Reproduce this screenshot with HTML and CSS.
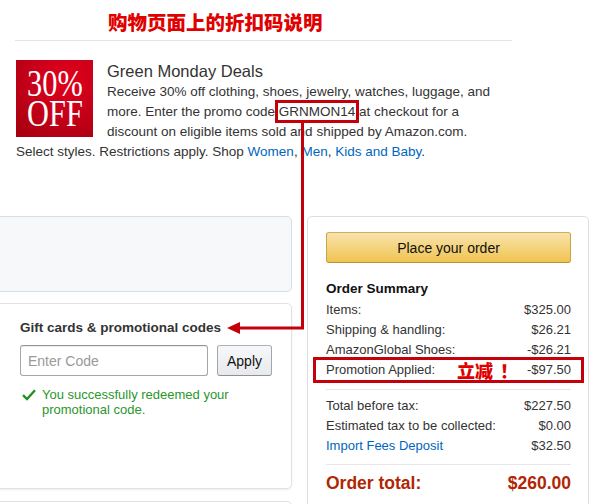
FILE: index.html
```html
<!DOCTYPE html>
<html>
<head>
<meta charset="utf-8">
<link rel="stylesheet" href="styles.css">
</head>
<body>
<div class="page">
  <header class="top">
    <h1 class="title">购物页面上的折扣码说明</h1>
  </header>
  <section class="promo">
    <div class="badge"><span>30%</span><span>OFF</span></div>
    <h2 class="promo-title">Green Monday Deals</h2>
    <p class="promo-text">Receive 30% off clothing, shoes, jewelry, watches, luggage, and more. Enter the promo code <span class="code">GRNMON14</span> at checkout for a discount on eligible items sold and shipped by Amazon.com. Select styles. Restrictions apply. Shop <a href="#">Women</a>, <a href="#">Men</a>, <a href="#">Kids and Baby</a>.</p>
  </section>
  <div class="checkout">
    <div class="left">
      <div class="panel panel-grey"></div>
      <div class="panel panel-gift">
        <h3 class="gift-title">Gift cards &amp; promotional codes</h3>
        <div class="code-row">
          <input class="code-input" type="text" placeholder="Enter Code">
          <button class="apply">Apply</button>
        </div>
        <div class="success">
          <svg class="check" width="14" height="12" viewBox="0 0 14 12"><path d="M1 6.2 L5 10 L13 1.2" fill="none" stroke="#1f8f1f" stroke-width="2.3"/></svg>
          <span>You successfully redeemed your promotional code.</span>
        </div>
      </div>
      <div class="panel panel-next"></div>
    </div>
    <div class="right">
      <div class="summary">
        <button class="place">Place your order</button>
        <h3 class="sum-title">Order Summary</h3>
        <div class="row"><span class="lbl">Items:</span><span class="val">$325.00</span></div>
        <div class="row"><span class="lbl">Shipping &amp; handling:</span><span class="val">$26.21</span></div>
        <div class="row"><span class="lbl">AmazonGlobal Shoes:</span><span class="val">-$26.21</span></div>
        <div class="row row-promo"><span class="lbl">Promotion Applied:</span><span class="note">立减<span class="bang">！</span></span><span class="val">-$97.50</span></div>
        <div class="divider"></div>
        <div class="row"><span class="lbl">Total before tax:</span><span class="val">$227.50</span></div>
        <div class="row"><span class="lbl">Estimated tax to be collected:</span><span class="val">$0.00</span></div>
        <div class="row"><a class="lbl link" href="#">Import Fees Deposit</a><span class="val">$32.50</span></div>
        <div class="divider divider-2"></div>
        <div class="row total"><span class="lbl">Order total:</span><span class="val">$260.00</span></div>
      </div>
    </div>
  </div>
  <svg class="annot" width="596" height="504" viewBox="0 0 596 504">
    <path d="M302.5 122 V328 H238" fill="none" stroke="#c4000b" stroke-width="3"/>
    <polygon points="227,328 240,322 240,334" fill="#c4000b"/>
  </svg>
</div>
</body>
</html>
```
FILE: styles.css
```css
html, body {
  margin: 0;
  padding: 0;
  background: #fff;
}
body {
  width: 596px;
  height: 504px;
  overflow: hidden;
  font-family: "Liberation Sans", Arial, sans-serif;
  color: #333;
}
.page {
  position: relative;
  width: 596px;
  height: 504px;
  overflow: hidden;
}
.top {
  margin: 0 84px 0 15px;
  padding-top: 8px;
  border-bottom: 1px solid #e4e4e4;
  padding-bottom: 4px;
}
.title {
  margin: 0;
  padding-left: 93px;
  font-family: "Noto Sans CJK SC", sans-serif;
  font-size: 19.5px;
  line-height: 28px;
  font-weight: 900;
  color: #e00000;
}
.promo {
  margin-top: 19px;
  padding-left: 16px;
  width: 489px;
}
.badge {
  float: left;
  width: 77px;
  height: 77px;
  margin-right: 14px;
  background: radial-gradient(circle at 65% 25%, #e2001b 0%, #c8001a 45%, #a3000e 100%);
  display: flex;
  flex-direction: column;
  align-items: center;
  justify-content: center;
  color: #fff;
  font-family: "Liberation Serif", "Times New Roman", serif;
  font-size: 37px;
  line-height: 30px;
}
.badge span {
  display: block;
  transform: scaleX(0.82);
}
.promo-title {
  margin: 0;
  font-size: 16.5px;
  line-height: 22px;
  font-weight: normal;
  color: #333;
}
.promo-text {
  margin: 0;
  font-size: 13.5px;
  line-height: 20px;
  color: #333;
}
.promo-text a {
  color: #0066c0;
  text-decoration: none;
}
.code {
  outline: 3px solid #c4000b;
  outline-offset: 1px;
}
.checkout {
  margin-top: 54px;
  margin-left: -10px;
  display: grid;
  grid-template-columns: 302px 282px;
  column-gap: 15px;
  align-items: start;
}
.panel {
  box-sizing: border-box;
  border-radius: 5px;
}
.panel-grey {
  height: 76px;
  background: #f6f8f9;
  border: 1px solid #d5dfe4;
}
.panel-gift {
  margin-top: 11px;
  height: 186px;
  border: 1px solid #e2e2e2;
  box-shadow: 0 1px 2px rgba(0,0,0,0.08);
  padding: 15px 0 0 29px;
}
.panel-next {
  margin-top: 12px;
  height: 60px;
  border: 1px solid #e2e2e2;
}
.gift-title {
  margin: 0;
  font-size: 13.5px;
  line-height: 18px;
  font-weight: bold;
  color: #333;
}
.code-row {
  display: flex;
  margin-top: 8px;
}
.code-input {
  box-sizing: border-box;
  width: 188px;
  height: 31px;
  border: 1px solid #a6a6a6;
  border-top-color: #949494;
  border-radius: 3px;
  box-shadow: 0 1px 0 rgba(255,255,255,.5), 0 1px 0 rgba(0,0,0,.07) inset;
  padding: 0 7px;
  font-family: "Liberation Sans", Arial, sans-serif;
  font-size: 14px;
  color: #111;
  margin: 0;
}
.code-input::placeholder {
  color: #9a9a9a;
}
.apply {
  box-sizing: border-box;
  margin: 0 0 0 9px;
  width: 55px;
  height: 31px;
  border: 1px solid #adb1b8;
  border-color: #adb1b8 #a2a6ac #8d9096;
  border-radius: 3px;
  background: linear-gradient(to bottom, #f7f8fa, #e7e9ec);
  font-family: "Liberation Sans", Arial, sans-serif;
  font-size: 14px;
  color: #111;
  padding: 0;
}
.success {
  display: flex;
  align-items: flex-start;
  margin-top: 11px;
  padding-left: 2px;
  font-size: 13px;
  line-height: 15px;
  color: #2b962b;
  width: 220px;
}
.check {
  flex: none;
  margin-top: 2px;
  margin-right: 6px;
}
.summary {
  box-sizing: border-box;
  border: 1px solid #dddddd;
  border-radius: 5px;
  padding: 15px 17px 40px 18px;
}
.place {
  display: block;
  box-sizing: border-box;
  width: 245px;
  height: 31px;
  margin: 0;
  padding: 0;
  border: 1px solid #a88734;
  border-color: #d3ae53 #c9a449 #b8923a;
  border-radius: 3px;
  background: linear-gradient(to bottom, #f8e3ad, #f0c44f);
  font-family: "Liberation Sans", Arial, sans-serif;
  font-size: 14px;
  color: #111;
}
.sum-title {
  margin: 16px 0 1px;
  font-size: 13.5px;
  line-height: 20px;
  font-weight: bold;
  color: #111;
}
.row {
  position: relative;
  display: flex;
  align-items: center;
  font-size: 13px;
  line-height: 20px;
  color: #333;
}
.row .lbl {
  flex: 1;
}
.row .link {
  color: #0066c0;
  text-decoration: none;
}
.row-promo::after {
  content: "";
  position: absolute;
  top: -3px;
  bottom: -3px;
  left: -13px;
  right: -13px;
  border: 3px solid #c4000b;
}
.note {
  font-family: "Noto Sans CJK SC", sans-serif;
  font-size: 18px;
  font-weight: 900;
  line-height: 20px;
  color: #e00000;
  margin-right: 9px;
}
.bang {
  padding-left: 7px;
}
.divider {
  height: 1px;
  background: #e7e7e7;
  margin: 9px 0 6px;
}
.divider-2 {
  margin: 8px 0 6px;
}
.total {
  font-size: 17.5px;
  line-height: 24px;
  font-weight: bold;
  color: #b12704;
}
.annot {
  position: absolute;
  top: 0;
  left: 0;
  pointer-events: none;
}
```
